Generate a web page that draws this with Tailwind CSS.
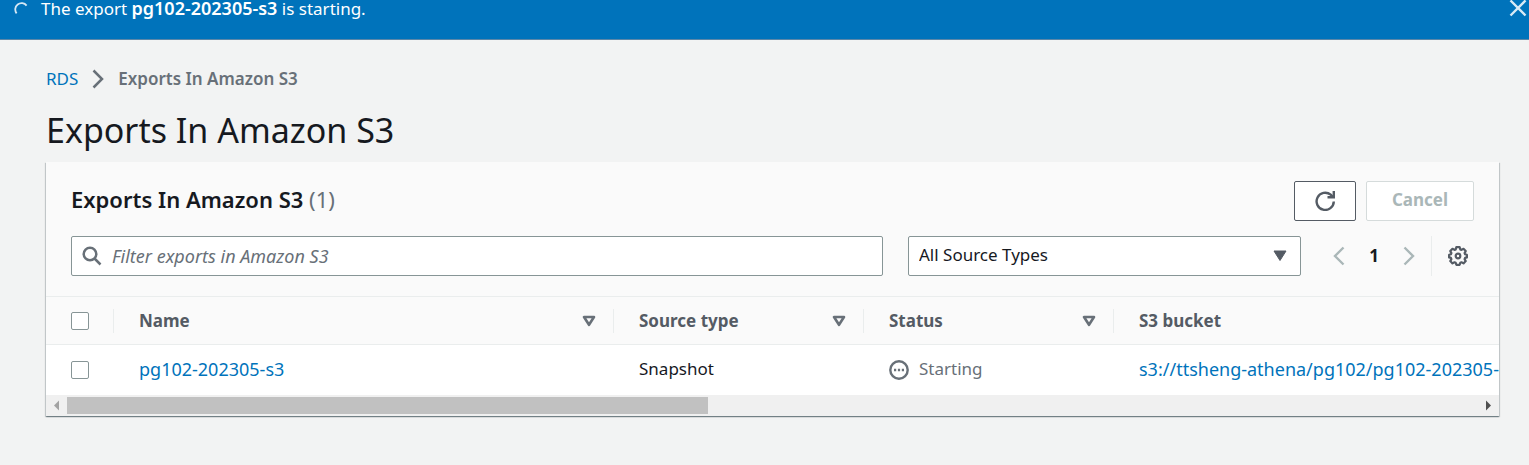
<!DOCTYPE html>
<html lang="en">
<head>
<meta charset="utf-8">
<title>Exports In Amazon S3</title>
<script src="https://cdn.jsdelivr.net/npm/@tailwindcss/browser@4"></script>
</head>
<body class="min-h-screen bg-[#f2f3f3] font-['Noto_Sans','Open_Sans',sans-serif] text-[17px] leading-6 text-[#16191f]">
  <div role="status" class="flex h-10 items-start border-b border-[#5c87a8] bg-[#0073bb] pr-0.5 pl-3.5 text-white">
    <svg class="mt-0.5 size-3.5 shrink-0" viewBox="0 0 14 14" fill="none" stroke="#d5e8f5" stroke-width="1.8"><path d="M2.6 11.4A6.1 6.1 0 0 1 12.6 3.6"/></svg>
    <p class="ml-[13px] grow leading-4">The export <b class="text-[18px] leading-4 font-semibold">pg102-202305-s3</b> is starting.</p>
    <button type="button" aria-label="Dismiss" class="shrink-0">
      <svg class="size-4.5" viewBox="0 0 18 18" fill="none" stroke="#d9eaf5" stroke-width="2.4"><path d="M1.5 0.5 16.5 15.5M16.5 0.5 1.5 15.5"/></svg>
    </button>
  </div>

  <main class="pt-[27px] pr-[30px] pb-12 pl-[46px]">
    <nav aria-label="Breadcrumb" class="flex items-center">
      <a href="#" class="text-[#0073bb]">RDS</a>
      <svg class="mx-3.5 h-5 w-3" viewBox="0 0 12 20" fill="none" stroke="#687078" stroke-width="2.5"><path d="M1.5 1.5 10 10 1.5 18.5"/></svg>
      <span class="font-semibold text-[#687078]">Exports In Amazon S3</span>
    </nav>
    <h1 class="mt-4 text-[34px] leading-[46px]">Exports In Amazon S3</h1>

    <section class="mt-[9px] overflow-hidden bg-[#fafafa] shadow-[0_1px_1px_0_rgba(0,28,36,0.35),1px_1px_1px_0_rgba(0,28,36,0.15),-1px_1px_1px_0_rgba(0,28,36,0.15)]">
      <div class="flex justify-between px-[25px] pt-[19px]">
        <h2 class="text-[22px] leading-9 font-semibold">Exports In Amazon S3 <span class="font-normal text-[#687078]">(1)</span></h2>
        <div class="flex gap-2.5">
          <button type="button" aria-label="Refresh" class="flex h-10 w-[62px] items-center justify-center rounded-xs border border-[#545b64] bg-white">
            <svg class="size-5" viewBox="0 0 20 20" fill="none" stroke="#545b64" stroke-width="2.4"><path d="M18.8 10.5A8.600 8.600 0 1 1 15.700 3.700L18 6"/><path d="M18.8 0V6.200H12.500"/></svg>
          </button>
          <button type="button" disabled class="h-10 w-[108px] rounded-xs border border-[#d5dbdb] bg-white pb-0.5 font-bold text-[#aab7b8]">Cancel</button>
        </div>
      </div>

      <div class="flex items-center px-[25px] pt-[15px] pb-5">
        <label class="flex h-10 grow items-center rounded-xs border border-[#879596] bg-white px-2.5">
          <svg class="size-5 shrink-0" viewBox="0 0 20 20" fill="none" stroke="#687078" stroke-width="2.5"><circle cx="8" cy="8" r="6.3"/><path d="M12.5 12.5 18.5 18.5"/></svg>
          <input type="text" aria-label="Filter exports" placeholder="Filter exports in Amazon S3" class="ml-2.5 min-w-0 grow bg-transparent text-[18px] outline-none placeholder:text-[#687078] placeholder:italic">
        </label>
        <div class="relative ml-[25px] w-[393px] shrink-0">
          <select aria-label="Source type" class="h-10 w-full appearance-none rounded-xs border border-[#879596] bg-white px-2.5 pb-0.5"><option>All Source Types</option></select>
          <svg class="pointer-events-none absolute top-3.5 right-3.5 h-3 w-3.5" viewBox="0 0 14 12" fill="#545b64"><path d="M1 1H13L7 10.5Z" stroke="#545b64" stroke-linejoin="round"/></svg>
        </div>
        <div class="ml-8 flex shrink-0 items-center">
          <button type="button" aria-label="Previous page"><svg class="h-5 w-3" viewBox="0 0 12 20" fill="none" stroke="#aab7b8" stroke-width="2.4"><path d="M10.5 1.5 2 10 10.5 18.5"/></svg></button>
          <button type="button" class="mx-5 w-[18px] font-bold">1</button>
          <button type="button" aria-label="Next page"><svg class="h-5 w-3" viewBox="0 0 12 20" fill="none" stroke="#aab7b8" stroke-width="2.4"><path d="M1.5 1.5 10 10 1.5 18.5"/></svg></button>
          <div class="ml-4 flex h-10 items-center border-l border-[#eaeded] pr-1.5 pl-4">
            <button type="button" aria-label="Preferences">
              <svg class="size-5" viewBox="0 0 20 20" fill="none" stroke="#545b64" stroke-width="2.2" stroke-linejoin="round"><path d="M8.3 1.2h3.4l.6 2.2 1.2.5 2-1.1 2.2 2.3-1.1 2 .5 1.2 1.8.5v2.6l-1.8.5-.5 1.2 1.1 2-2.2 2.3-2-1.1-1.2.5-.6 2H8.3l-.6-2-1.2-.5-2 1.1-2.2-2.3 1.1-2-.5-1.2-1.8-.5V8.800l1.800-.5.5-1.200-1.100-2 2.200-2.300 2 1.100 1.200-.5z"/><circle cx="10" cy="10" r="2.3"/></svg>
            </button>
          </div>
        </div>
      </div>

      <div class="overflow-hidden">
        <table class="w-[3200px] table-fixed border-separate border-spacing-0 text-left">
          <colgroup><col class="w-[67px]"><col class="w-[500px]"><col class="w-[250px]"><col class="w-[250px]"><col></colgroup>
          <thead>
            <tr class="h-[49px] text-[#545b64]">
              <th class="border-y border-[#eaeded] p-0 pl-[25px]"><input type="checkbox" aria-label="Select all exports" class="block size-[18px] appearance-none rounded-xs border border-[#879596] bg-white"></th>
              <th class="border-y border-[#eaeded] p-0"><div class="flex items-center justify-between border-l border-[#eaeded] pr-[17px] pl-[25px]">Name<svg class="h-3 w-3.5" viewBox="0 0 14 12" fill="none" stroke="#687078" stroke-width="2.6" stroke-linejoin="round"><path d="M2 2H12L7 9.800Z"/></svg></div></th>
              <th class="border-y border-[#eaeded] p-0"><div class="flex items-center justify-between border-l border-[#eaeded] pr-[17px] pl-[25px]">Source type<svg class="h-3 w-3.5" viewBox="0 0 14 12" fill="none" stroke="#687078" stroke-width="2.6" stroke-linejoin="round"><path d="M2 2H12L7 9.800Z"/></svg></div></th>
              <th class="border-y border-[#eaeded] p-0"><div class="flex items-center justify-between border-l border-[#eaeded] pr-[17px] pl-[25px]">Status<svg class="h-3 w-3.5" viewBox="0 0 14 12" fill="none" stroke="#687078" stroke-width="2.6" stroke-linejoin="round"><path d="M2 2H12L7 9.800Z"/></svg></div></th>
              <th class="border-y border-[#eaeded] p-0"><div class="border-l border-[#eaeded] pl-[25px]">S3 bucket</div></th>
            </tr>
          </thead>
          <tbody>
            <tr class="h-[50px] bg-white">
              <td class="p-0 pl-[25px]"><input type="checkbox" aria-label="Select pg102-202305-s3" class="block size-[18px] appearance-none rounded-xs border border-[#879596] bg-white"></td>
              <td class="p-0 pb-0.5 pl-[26px]"><a href="#" class="text-[18px] leading-6 text-[#0073bb]">pg102-202305-s3</a></td>
              <td class="p-0 pb-0.5 pl-[26px]">Snapshot</td>
              <td class="p-0 pl-[26px] text-[#687078]"><div class="flex items-center gap-2.5"><svg class="size-5" viewBox="0 0 20 20" fill="none" stroke="#687078" stroke-width="2.4"><circle cx="10" cy="10" r="8.700"/><path d="M5 10h2.200M8.900 10h2.200M12.800 10h2.200"/></svg><span class="pb-0.5">Starting</span></div></td>
              <td class="p-0 pb-0.5 pl-[26px]"><a href="#" class="text-[18px] leading-6 text-[#0073bb]">s3://ttsheng-athena/pg102/pg102-202305-s3</a></td>
            </tr>
          </tbody>
        </table>
      </div>
      <div class="flex h-[21px] items-center justify-between bg-[#f0f0f0]" aria-hidden="true">
        <svg class="h-[21px] w-[21px] shrink-0" viewBox="0 0 21 21" fill="#a3a3a3"><path d="M13 5.500V15.500L8 10.500Z"/></svg>
        <div class="grow"><div class="h-[17px] w-[45.4%] bg-[#c1c1c1]"></div></div>
        <svg class="h-[21px] w-[21px] shrink-0" viewBox="0 0 21 21" fill="#505050"><path d="M8 5.500V15.500L13 10.500Z"/></svg>
      </div>
    </section>
  </main>
</body>
</html>
